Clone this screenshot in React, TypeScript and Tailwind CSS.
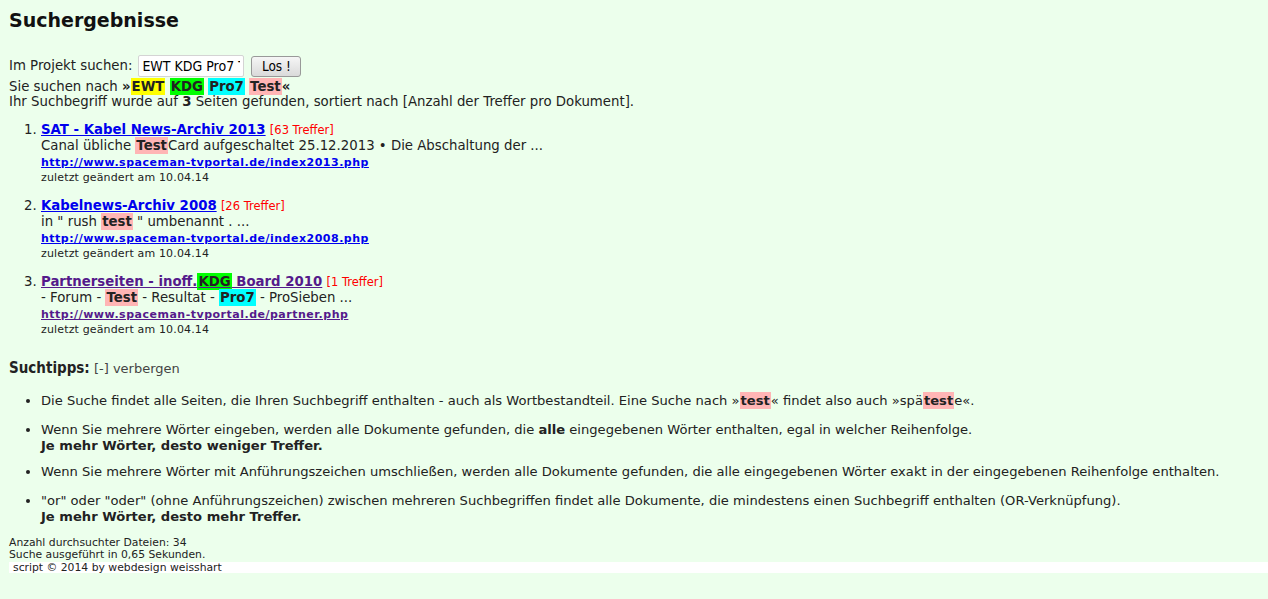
import React from "react";

const verdana = { fontFamily: '"DejaVu Sans", Verdana, sans-serif' };
const tahoma = { fontFamily: '"DejaVu Sans", Tahoma, sans-serif' };
const tahomaNarrow = { fontFamily: '"DejaVu Sans Condensed", "DejaVu Sans", Tahoma, sans-serif' };

function Hl({ c, children }: { c: "y" | "g" | "c" | "p"; children: React.ReactNode }) {
  const bg =
    c === "y" ? "bg-[#ffff00]" : c === "g" ? "bg-[#00ff00]" : c === "c" ? "bg-[#00ffff]" : "bg-[#ffb5b5]";
  return <b className={`${bg} px-px py-px font-bold text-[#222]`}>{children}</b>;
}

const results = [
  {
    title: <>SAT - Kabel News-Archiv 2013</>,
    hits: "[63 Treffer]",
    snippet: <>Canal übliche <Hl c="p">Test</Hl>Card aufgeschaltet 25.12.2013 • Die Abschaltung der ...</>,
    url: "http://www.spaceman-tvportal.de/index2013.php",
    visited: false,
  },
  {
    title: <>Kabelnews-Archiv 2008</>,
    hits: "[26 Treffer]",
    snippet: <>in " rush <Hl c="p">test</Hl> " umbenannt . ...</>,
    url: "http://www.spaceman-tvportal.de/index2008.php",
    visited: false,
  },
  {
    title: <>Partnerseiten - inoff.<Hl c="g">KDG</Hl> Board 2010</>,
    hits: "[1 Treffer]",
    snippet: <>- Forum - <Hl c="p">Test</Hl> - Resultat - <Hl c="c">Pro7</Hl> - ProSieben ...</>,
    url: "http://www.spaceman-tvportal.de/partner.php",
    visited: true,
  },
];

export default function App() {
  return (
    <div className="min-h-[599px] bg-[#ecffec] text-[#222]">
      <div className="pl-[9px]" style={verdana}>
        <h2 className="pt-[8px] text-[19px] font-bold leading-[24px] text-[#111]">Suchergebnisse</h2>

        {/* search form */}
        <div className="mt-[23px] flex items-center text-[13.3px] leading-[16px]">
          <span>Im Projekt suchen:</span>
          <input
            readOnly
            value="EWT KDG Pro7 Test"
            className="ml-[6px] h-[22px] w-[106px] rounded-[2px] border border-[#d4d4d4] bg-white px-[3px] text-[14px] text-black outline-none"
            style={tahomaNarrow}
          />
          <button
            className="ml-[7px] h-[21px] w-[50px] rounded-[3px] border border-[#999] bg-gradient-to-b from-[#f6f6f6] to-[#dadada] text-[13.5px] leading-[18px] text-black"
            style={tahomaNarrow}
          >
            Los !
          </button>
        </div>

        <div className="mt-[1px] h-[17px] text-[13.3px] leading-[17px]">
          Sie suchen nach <b>»</b><Hl c="y">EWT</Hl> <Hl c="g">KDG</Hl> <Hl c="c">Pro7</Hl> <Hl c="p">Test</Hl><b>«</b>
        </div>
        <div className="h-[14px] text-[13.3px] leading-[14px]">
          Ihr Suchbegriff wurde auf <b>3</b> Seiten gefunden, sortiert nach [Anzahl der Treffer pro Dokument].
        </div>

        {/* results */}
        <ol className="mt-[13px] list-decimal pl-[32px] text-[13.3px] leading-[16px]">
          {results.map((r, i) => (
            <li key={i} className={i === 0 ? "" : "mt-[12px]"}>
              <div className="h-[16px] leading-[16px]">
                <a
                  href="#"
                  className={`font-bold underline ${r.visited ? "text-[#551a8b]" : "text-[#0000ee]"}`}
                >
                  {r.title}
                </a>{" "}
                <span className="text-[11.5px] text-[#ff0000]">{r.hits}</span>
              </div>
              <div className="h-[16px] leading-[16px]">{r.snippet}</div>
              <div className="h-[16px] leading-[16px]">
                <a
                  href="#"
                  className={`text-[11px] font-bold tracking-[0.5px] underline ${r.visited ? "text-[#551a8b]" : "text-[#0000ee]"}`}
                >
                  {r.url}
                </a>
              </div>
              <div className="h-[16px] text-[11px] leading-[16px] tracking-[0.15px]">zuletzt geändert am 10.04.14</div>
            </li>
          ))}
        </ol>
      </div>

      {/* tips */}
      <div className="pl-[9px]">
        <div className="mt-[21px] h-[16px] leading-[16px]">
          <b className="text-[15px]" style={tahomaNarrow}>Suchtipps:</b>{" "}
          <span className="text-[13px] text-[#444]" style={tahoma}>[-] verbergen</span>
        </div>
        <ul className="mt-[18px] list-disc pl-[32px] text-[13.1px] leading-[16px]" style={tahoma}>
          <li>
            Die Suche findet alle Seiten, die Ihren Suchbegriff enthalten - auch als Wortbestandteil. Eine Suche nach »
            <Hl c="p">test</Hl>« findet also auch »spä<Hl c="p">test</Hl>e«.
          </li>
          <li className="mt-[13px]">
            Wenn Sie mehrere Wörter eingeben, werden alle Dokumente gefunden, die <b>alle</b> eingegebenen Wörter
            enthalten, egal in welcher Reihenfolge.
            <br />
            <b>Je mehr Wörter, desto weniger Treffer.</b>
          </li>
          <li className="mt-[10px]">
            Wenn Sie mehrere Wörter mit Anführungszeichen umschließen, werden alle Dokumente gefunden, die alle
            eingegebenen Wörter exakt in der eingegebenen Reihenfolge enthalten.
          </li>
          <li className="mt-[13px]">
            "or" oder "oder" (ohne Anführungszeichen) zwischen mehreren Suchbegriffen findet alle Dokumente, die
            mindestens einen Suchbegriff enthalten (OR-Verknüpfung).
            <br />
            <b>Je mehr Wörter, desto mehr Treffer.</b>
          </li>
        </ul>
      </div>

      {/* footer */}
      <div className="mt-[12px] pl-[9px] text-[10.8px] leading-[12px]" style={verdana}>
        <div>Anzahl durchsuchter Dateien: 34</div>
        <div>Suche ausgeführt in 0,65 Sekunden.</div>
      </div>
      <div className="ml-[9px] mt-[1px] bg-white pl-[4px] text-[10.8px] leading-[11px]" style={verdana}>
        script © 2014 by webdesign weisshart
      </div>
    </div>
  );
}
